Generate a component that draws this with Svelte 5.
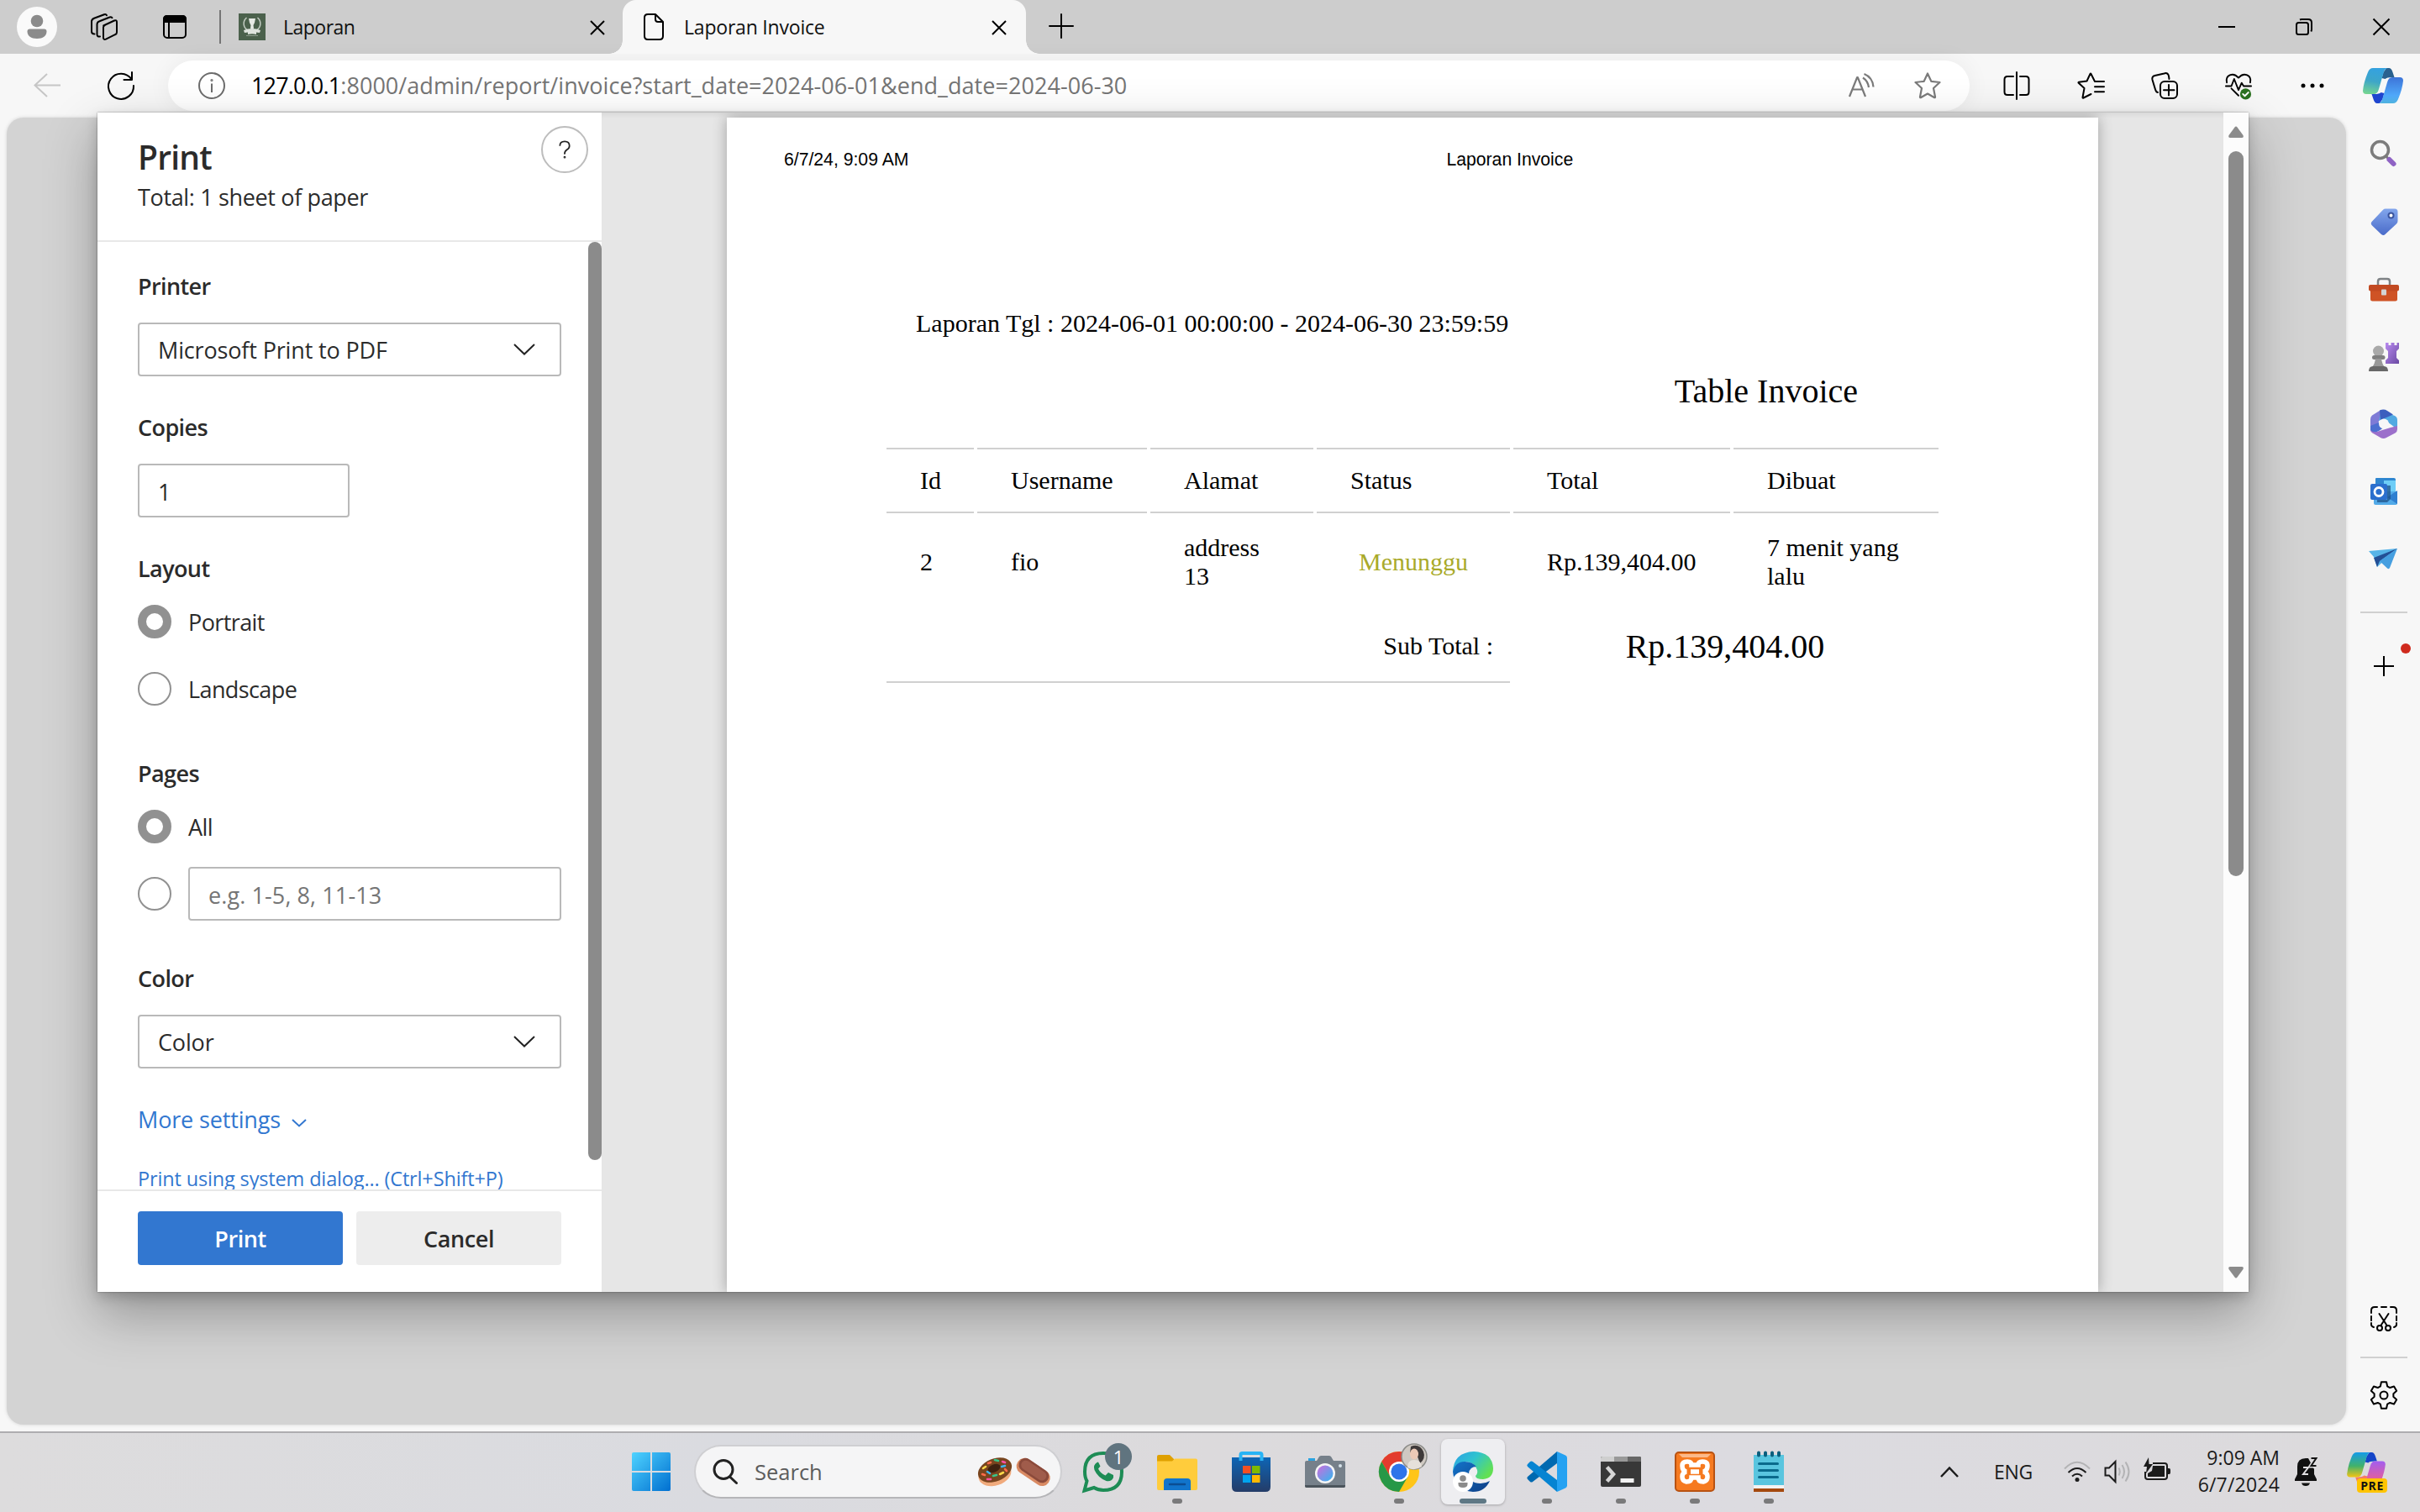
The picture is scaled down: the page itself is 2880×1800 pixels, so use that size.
<script>
  const columns = ['Id', 'Username', 'Alamat', 'Status', 'Total', 'Dibuat'];

  // Outline of a six-toothed cog centred on (cx, cy).
  function cog(cx, cy, outer, inner) {
    const pts = [];
    for (let i = 0; i < 6; i++) {
      const base = -90 + i * 60;
      for (const [off, r] of [[-21, inner], [-11, outer], [11, outer], [21, inner]]) {
        const a = ((base + off) * Math.PI) / 180;
        pts.push(`${(cx + r * Math.cos(a)).toFixed(2)} ${(cy + r * Math.sin(a)).toFixed(2)}`);
      }
    }
    return `M${pts.join('L')}Z`;
  }
</script>

{#snippet close()}
  <svg class="close" viewBox="0 0 18 18"><path d="M1 1l16 16M17 1L1 17" /></svg>
{/snippet}

{#snippet chevron()}
  <svg class="chev" viewBox="0 0 26 14"><path d="M1 1l12 11.5L25 1" /></svg>
{/snippet}

{#snippet ribbons(left, right, top, bottom)}
  <path d="M28 0h3q3 0 4.500 5l2 6h-3q-6 0-8 2l-4-1 2-7z" fill={top} />
  <path d="M20 42h-3q-3 0-4.500-5l-2-6h3q6 0 8-2l4 1-2 7z" fill={bottom} />
  <path d="M12 0H30Q26 0 24.500 6L19 25q-1.500 6-6 6H4Q0 31 0 27 1 17 6 5 8 0 12 0z" fill={left} />
  <path d="M36 42H18Q22 42 23.500 36L29 17q1.500-6 6-6H44Q48 11 48 15 47 25 42 37 40 42 36 42z" fill={right} />
{/snippet}

<div class="screen">
  <header class="tabs">
    <svg class="profile" viewBox="0 0 48 48">
      <circle cx="24" cy="24" r="24" fill="#fafafa" />
      <circle cx="24" cy="17" r="7.3" fill="#8b8b8b" />
      <path d="M15.500 26.500h17a3 3 0 0 1 3 3c0 5-4.500 8.500-11.500 8.500s-11.500-3.500-11.500-8.500a3 3 0 0 1 3-3z" fill="#8b8b8b" />
    </svg>
    <svg class="spaces line" viewBox="0 0 32 32">
      <path d="M15.200 14.500 28 8.500q3-1 3 1.500v12.500q0 2-2 2.700L18 30.600q-3 1-3-1.600V16.500q0-1.500 1.500-2.200" />
      <path d="M25.500 5.200q-.8-1.500-3-.7L10.500 9.200Q7.500 10.200 7.500 13v12q0 3 3.500 2.500" />
      <path d="M19 2.200q-1-1.700-3-.9L4 5.800Q1 7 1 9.500V21.500q0 3 3.500 3" />
    </svg>
    <svg class="tabact line" viewBox="0 0 28 28">
      <path d="M1 8V5q0-4 4-4h18q4 0 4 4v3z" fill="#000" />
      <rect x="1" y="1" width="26" height="26" rx="4" />
      <path d="M7 8v19" />
    </svg>
    <i class="divider"></i>
    <div class="tab">
      <svg class="fav" viewBox="0 0 32 32">
        <path fill="#4b614c" d="M0 0h32v32H0z" />
        <path d="M12 6h8l-1 5-1.500 3 .5 4h-4l.5-4L13 11z" fill="#e6e9e4" />
        <path d="M9.500 5C4 10 5.500 18 12 20.500M22.500 5C28 10 26.500 18 20 20.500" stroke="#c3ccc2" stroke-width="1.500" fill="none" />
        <path d="M6 20q10-4 20 0l-1 3-4-.5v2.500q-5-1.500-10 0v-2.500l-4 .5z" fill="#dfe4de" />
        <path d="M9 26.500h14" stroke="#8b9b8b" stroke-width="1" />
      </svg>
      <span class="short">Laporan</span>
      {@render close()}
    </div>
    <div class="tab active">
      <svg class="doc line" viewBox="0 0 24 32">
        <path d="M5 1h9l9 9v17q0 4-4 4H5q-4 0-4-4V5q0-4 4-4zM14 1v6q0 3 3 3h6" />
      </svg>
      <span>Laporan Invoice</span>
      {@render close()}
    </div>
    <svg class="plus line" viewBox="0 0 28 28"><path d="M14 0v28M0 14h28" /></svg>
    <div class="win">
      <svg viewBox="0 0 20 20"><path d="M0 10h20" /></svg>
      <svg viewBox="0 0 20 20"><rect x="1" y="5" width="14" height="14" rx="2.500" /><path d="M5 1.500Q6 1 7 1h8q4 0 4 4v8q0 1.500-.7 2.500" /></svg>
      <svg viewBox="0 0 20 20"><path d="M.5.5l19 19M19.500.5l-19 19" /></svg>
    </div>
  </header>

  <div class="toolbar">
    <svg class="back" viewBox="0 0 32 32"><path d="M16 3 1.500 16.500 16 30M1.500 16.500H32" /></svg>
    <svg class="reload line" viewBox="0 0 32 32"><path d="M31 16A15 15 0 1 1 28.500 8.500M29 0v9h-9.500" /></svg>
    <div class="address">
      <svg class="info" viewBox="0 0 32 32"><circle cx="16" cy="16" r="15" /><path d="M16 13.500V24" /><circle cx="16" cy="9.500" r=".6" /></svg>
      <div class="url"><b>127.0.0.1</b><span>:8000/admin/report/invoice?start_date=2024-06-01&amp;end_date=2024-06-30</span></div>
      <svg class="ic grey" viewBox="0 0 32 32"><path d="M2 29 11.200 6h.6L21 29M5 20.500h13M18 6.500q6 4 7 11.500M19.500 2q10 4 11 15.500" /></svg>
      <svg class="ic grey" viewBox="0 0 32 32"><path d="M16 1.500l4.300 9.300 10.200 1.200-7.500 7 2 10.200q.2 1.500-1.200.8L16 25.500 8.200 30q-1.400.7-1.200-.8L9 19 1.500 12l10.200-1.200z" /></svg>
    </div>
    <div class="tools">
      <svg class="ic line" viewBox="0 0 32 32"><path d="M16 0v32M12 5H5Q1.500 5 1.500 8.500v15Q1.500 27 5 27h7M20 5h7q3.500 0 3.500 3.500v15Q30.500 27 27 27h-7" /></svg>
      <svg class="ic line" viewBox="0 0 32 32"><path d="M21 11h11M21 17.200h11M21 23.200h11M21 11 16.500 2q-.5-1-1 0L11.500 10.500 2 11.800q-1 .3-.3 1L8.500 19 6.500 30q0 1 1 .5L16.500 26" /></svg>
      <svg class="ic line" viewBox="0 0 32 32"><rect x="11" y="11" width="20" height="20" rx="5" /><path d="M21 15v12.500M15 21.200h12.500M8 24q-2 0-3-3.500L1.500 9q-1-4 3-5L15.500 1.500q4.500-1.500 5.500 3L21.500 8" /></svg>
      <svg class="ic line" viewBox="0 0 32 34"><path d="M1.200 13C-1 4 9-1 16 7c7-8 17-3 14.800 6M0 17.500h7l3.500-9 5.500 14 4-9 2.500 4H32M7 20.500l9 9" /><circle cx="25" cy="27.500" r="7" fill="#2b7220" stroke="none" /><path d="M21.500 27.500l2.500 2.500 4.500-4.500" stroke="#fff" /></svg>
      <svg class="ic" viewBox="0 0 32 32"><circle cx="5" cy="16" r="2.500" /><circle cx="16" cy="16" r="2.500" /><circle cx="27" cy="16" r="2.500" /></svg>
    </div>
    <svg class="pilot" viewBox="0 0 48 42">
      <defs>
        <linearGradient id="pa" x1=".2" y1="0" x2="0" y2="1"><stop offset="0" stop-color="#35a2de" /><stop offset=".45" stop-color="#3ea6c8" /><stop offset="1" stop-color="#7ad98c" /></linearGradient>
        <linearGradient id="pb" x1="0" y1="0" x2="0" y2="1"><stop offset="0" stop-color="#3d74d8" /><stop offset=".7" stop-color="#4fa8fa" /><stop offset="1" stop-color="#50b3df" /></linearGradient>
      </defs>
      {@render ribbons('url(#pa)', 'url(#pb)', '#2a618e', '#1f45cf')}
    </svg>
  </div>

  <div class="middle">
    <div class="content"></div>
    <aside class="side">
      <svg viewBox="0 0 36 36">
        <defs><linearGradient id="vi" x1="0" y1="0" x2="1" y2="1"><stop offset="0" stop-color="#b98af0" /><stop offset="1" stop-color="#6b4aa3" /></linearGradient></defs>
        <circle cx="13.500" cy="11.500" r="10" fill="none" stroke="#7c7c7c" stroke-width="3.500" />
        <path d="M20.500 19l3 3" stroke="#7a7a7a" stroke-width="3" /><path d="M24.500 23l5 5" stroke="#8f63c4" stroke-width="6" stroke-linecap="round" />
      </svg>
      <svg viewBox="0 0 36 36">
        <defs><linearGradient id="tg" x1="0" y1="0" x2="0" y2="1"><stop offset="0" stop-color="#82a6ec" /><stop offset="1" stop-color="#4a6bc9" /></linearGradient></defs>
        <path d="M20 1.500h11q3.500 0 3.500 3.500v11q0 2-1.500 3.500L19.500 32q-2 2-4.500 0L4 21.500q-2.500-2.500 0-5L17 2.800q1.200-1.300 3-1.300z" fill="url(#tg)" /><circle cx="26.500" cy="9.500" r="3" fill="#fff" stroke="#3a559f" stroke-width="2" />
      </svg>
      <svg viewBox="0 0 36 36">
        <path d="M11 12V8q0-3 3-3h8q3 0 3 3v4" fill="none" stroke="#7e8285" stroke-width="2.500" />
        <path d="M2 16h32v13q0 2.500-2.500 2.500h-27Q2 31.500 2 29z" fill="#cf5325" /><rect y="12" width="36" height="7.500" rx="2" fill="#c24a22" /><rect x="15" y="17.500" width="6" height="7" rx="1" fill="#d4d4d4" />
      </svg>
      <svg viewBox="0 0 36 36">
        <circle cx="11.500" cy="11" r="6.500" fill="#a9a9a9" /><rect x="4" y="16" width="15.500" height="5" rx="2.500" fill="#7f7f7f" /><path d="M8 20h7q1 7 4 10H4q3-3 4-10z" fill="#989898" /><path d="M0 35q0-6 5-6h13q5 0 5 6z" fill="#686868" />
        <path d="M20 1h3.500v3h3V1h4v3h3V1H36v7l-3 3v8l3 3v4H20v-4l3-3v-8l-3-3z" fill="url(#vi)" />
      </svg>
      <svg viewBox="0 0 36 36">
        <path d="M12 2.500 4 7.500Q2 9 2 12v12q0 2.500 2.500 4L9 30l3-16 6-5 4-6Q17-.5 12 2.500z" fill="#7e7bd6" />
        <path d="M15 2 31 8q3 1.500 3 5v11L18 12l-6 2z" fill="#52a9e2" /><path d="M13 1.500q5-2 9 .5l7 4.500L14 13z" fill="#3c5fbe" /><path d="M2 24q4 5 11 2l13-4 8-2v4q0 3-2.500 4.500L21 34q-3.500 2-7 0L4.500 28.500Q2 27 2 24z" fill="#9c70cb" /><path d="M2 20v5q4 4 10 1l6-4-6-6z" fill="#4d6fd0" /><circle cx="18" cy="17.500" r="6" fill="#f7f7f7" />
      </svg>
      <svg viewBox="0 0 36 36">
        <path d="M9 2h21q2 0 2 2v16H8V3q0-1 1-1z" fill="#2e86d0" /><path d="M18 5h14v14H18z" fill="#6dcdf7" /><path d="M6 18l28 0v14q0 2-2 2H8q-2 0-2-2z" fill="#52aae8" /><path d="M34 17v16L22 25z" fill="#2f7fd0" /><path d="M22 11h4v16l-4 4H10v-3h12z" fill="#1b4c83" opacity=".7" /><rect x="2" y="9" width="20" height="19" rx="2" fill="#2b6fce" /><circle cx="12" cy="18.500" r="5" fill="none" stroke="#fff" stroke-width="2.800" />
      </svg>
      <svg viewBox="0 0 36 36">
        <path d="M0 9 34 6 10 28 6 16z" fill="#57b4e8" /><path d="M6 17 34 6 13 21 10 28z" fill="#234f95" /><path d="M34 6 25 29q-1 2-3 .5L13 21z" fill="#469fe0" />
      </svg>
      <hr />
      <div class="add"><svg viewBox="0 0 24 24"><path d="M12 0v24M0 12h24" stroke="#000" stroke-width="2" /></svg><i></i></div>
      <div class="grow"></div>
      <svg class="small line" viewBox="0 0 32 32">
        <path d="M1 9V6q0-4 4-4h3M13 2h6M24 2h3q4 0 4 4v3M1 13v5M31 13v5M1 21v2q0 2 3 3M31 21v2q0 2-3 3M10.500 10l8.500 13M21.500 10 13 23" /><circle cx="11" cy="27" r="3" /><circle cx="21" cy="27" r="3" />
      </svg>
      <hr class="low" />
      <svg class="gear line" viewBox="0 0 34 34"><path d={cog(17, 17, 16, 11.5)} /><circle cx="17" cy="17" r="4.500" /></svg>
    </aside>

    <section class="dialog">
      <div class="panel">
        <div class="head">
          <div><h1>Print</h1><p>Total: 1 sheet of paper</p></div>
          <span class="help"><svg viewBox="0 0 16 24"><path d="M1.500 7Q1.500 1 8 1t6.500 6q0 3-3.500 5.200T8 18.500" /><circle cx="8" cy="22.500" r=".6" /></svg></span>
        </div>
        <div class="scroll">
          <div class="form">
            <h2>Printer</h2>
            <div class="box">Microsoft Print to PDF{@render chevron()}</div>
            <h2>Copies</h2>
            <div class="box half">1</div>
            <h2>Layout</h2>
            <div class="row tight"><i class="radio on"></i>Portrait</div>
            <div class="row"><i class="radio"></i>Landscape</div>
            <h2 class="wide">Pages</h2>
            <div class="row tight"><i class="radio on"></i>All</div>
            <div class="row range"><i class="radio"></i><div class="box hint">e.g. 1-5, 8, 11-13</div></div>
            <h2 class="color">Color</h2>
            <div class="box">Color{@render chevron()}</div>
            <a class="more" href="#more">More settings<svg viewBox="0 0 18 10"><path d="M1 1l8 7.500L17 1" /></svg></a>
            <a class="system" href="#system">Print using system dialog... (Ctrl+Shift+P)</a>
          </div>
          <i class="thumb"></i>
        </div>
        <div class="actions"><button class="primary">Print</button><button>Cancel</button></div>
      </div>

      <div class="preview">
        <article class="paper">
          <div class="pagehead"><span>6/7/24, 9:09 AM</span><span>Laporan Invoice</span></div>
          <p class="period">Laporan Tgl : 2024-06-01 00:00:00 - 2024-06-30 23:59:59</p>
          <p class="title">Table Invoice</p>
          <div class="grid">
            {#each columns as c}<div class="th">{c}</div>{/each}
            <div class="td">2</div>
            <div class="td">fio</div>
            <div class="td">address<br />13</div>
            <div class="td wait">Menunggu</div>
            <div class="td">Rp.139,404.00</div>
            <div class="td">7 menit yang<br />lalu</div>
            <div class="sub">Sub Total :</div>
            <div class="sum">Rp.139,404.00</div>
          </div>
        </article>
      </div>
      <div class="bar">
        <svg viewBox="0 0 18 14"><path d="M7.500 1.500q1.500-2 3 0L17.500 11q1 3-1.500 3H2q-2.500 0-1.500-3z" /></svg>
        <i></i>
        <svg class="down" viewBox="0 0 18 14"><path d="M7.500 1.500q1.500-2 3 0L17.500 11q1 3-1.500 3H2q-2.500 0-1.500-3z" /></svg>
      </div>
    </section>
  </div>

  <footer class="taskbar">
    <svg class="start" viewBox="0 0 46 46">
      <defs><linearGradient id="st" x1="0" y1="0" x2="46" y2="46" gradientUnits="userSpaceOnUse"><stop offset="0" stop-color="#4fd3ff" /><stop offset="1" stop-color="#006fd0" /></linearGradient></defs>
      <path d="M2 0h20v22H0V2q0-2 2-2zM24 0h20q2 0 2 2v20H24zM0 24h22v22H2q-2 0-2-2zM24 24h22v20q0 2-2 2H24z" fill="url(#st)" />
    </svg>
    <div class="search">
      <svg class="glass" viewBox="0 0 30 30"><circle cx="13" cy="12.500" r="11" /><path d="M20.500 21l8 7.500" /></svg>
      <span>Search</span>
      <svg class="treats" viewBox="0 0 90 36">
        <ellipse cx="21" cy="21" rx="20" ry="13.500" fill="#f0aa7c" transform="rotate(-18 21 21)" />
        <ellipse cx="21" cy="16" rx="21" ry="13.500" fill="#78451f" transform="rotate(-22 21 16)" />
        <ellipse cx="20" cy="14" rx="8" ry="4.500" fill="#3f2110" transform="rotate(-22 20 14)" />
        <g stroke-width="2.600" stroke-linecap="round"><path d="M7 14l3-2M27 21l4-2" stroke="#ffd94a" /><path d="M13 8l3-1M6 21l3 1M33 15l2 2" stroke="#ff6a4a" /><path d="M21 4l4 1M19 23l4-1" stroke="#37c58a" /><path d="M29 12l4-1M12 18l3 2" stroke="#3fb5f0" /><path d="M30 6l3 1M12 27l4 0" stroke="#ff4fa0" /></g>
        <rect x="45" y="9" width="44" height="19" rx="9" fill="#d98a63" transform="rotate(34 67 18)" /><rect x="47" y="8.500" width="40" height="16" rx="8" fill="#8b4a3b" transform="rotate(34 67 17)" /><rect x="50" y="11" width="34" height="11" rx="5.500" fill="#a05c4b" transform="rotate(34 67 17)" />
      </svg>
    </div>
    <div class="apps">
      <div class="app">
        <svg viewBox="0 0 48 48"><path d="M1.500 46.500l3-11.500Q2 31 2 24 2 2 24 2t22 22-22 22q-6 0-11-3z" fill="none" stroke="#1d8c55" stroke-width="4" /><path d="M16.500 13q-5 3-3 9 4 9 14 13 6 1.500 8.500-4v-3l-6-3-3.500 3.500q-6-2.500-8.500-8l2.500-3-2.500-5z" fill="#1d8c55" /></svg>
        <span class="badge">1</span>
      </div>
      <div class="app run">
        <svg viewBox="0 0 48 48"><path d="M0 6q0-2 2-2h13l5 5v6H0z" fill="#dfa000" /><path d="M0 11.500h18l3-3h25q2 0 2 2V44q0 2-2 2H2q-2 0-2-2z" fill="#ffcc3c" /><path d="M8 46V36q0-4 4-4h24q4 0 4 4v10z" fill="#1174cb" /><path d="M15 39h18" stroke="#0b4d92" stroke-width="2.500" stroke-linecap="round" /></svg>
      </div>
      <div class="app">
        <svg viewBox="0 0 48 48"><defs><linearGradient id="ms" x1="0" y1="0" x2="0" y2="1"><stop offset="0" stop-color="#0e65b5" /><stop offset="1" stop-color="#243c68" /></linearGradient></defs>
          <path d="M1 7h46v35q0 6-6 6H7q-6 0-6-6z" fill="url(#ms)" /><path d="M11.500 11V4q0-2 2-2h21q2 0 2 2v7" fill="none" stroke="#27b3f5" stroke-width="4" />
          <path d="M14 17h9.500v9H14z" fill="#f25022" /><path d="M25 17h9.500v9H25z" fill="#7fba00" /><path d="M14 28h9.500v9H14z" fill="#00a4ef" /><path d="M25 28h9.500v9H25z" fill="#ffb900" /></svg>
      </div>
      <div class="app">
        <svg viewBox="0 0 48 48"><path d="M4 8h8v6H4z" fill="#2aa3e0" /><path d="M0 13q0-2 2-2h12l3-5q1-1 2.500-1h9q1.500 0 2.500 1l3 5h12q2 0 2 2v28q0 2-2 2H2q-2 0-2-2z" fill="#76808a" /><path d="M0 40h48v1q0 2-2 2H2q-2 0-2-2z" fill="#4b545c" /><circle cx="24" cy="26" r="12" fill="#f5f5f5" /><circle cx="24" cy="26" r="9.500" fill="url(#lens)" /><circle cx="42" cy="17" r="2" fill="#d6e2ea" />
          <defs><linearGradient id="lens" x1="0" y1="0" x2="1" y2="1"><stop offset=".2" stop-color="#b07ae0" /><stop offset=".9" stop-color="#3fb0ee" /></linearGradient></defs></svg>
      </div>
      <div class="app run">
        <svg viewBox="0 0 48 48"><circle cx="24" cy="24" r="24" fill="#ffc518" /><path d="M3.200 12A24 24 0 0 1 44.800 12H24z" fill="#e33b2e" /><path d="M3.200 12l10.400 18L24 24V12z" fill="#e33b2e" /><path d="M3.200 12A24 24 0 0 0 24 48l10.400-18L24 30l-10.400 0z" fill="#279847" /><circle cx="24" cy="24" r="12" fill="#fff" /><circle cx="24" cy="24" r="9.600" fill="#2d74ea" /></svg>
        <svg class="photo" viewBox="0 0 32 32"><circle cx="16" cy="16" r="15" fill="#cfc9c2" stroke="#8b8b88" stroke-width="1.500" /><path d="M12 4q10-4 15 6 3 8-4 14-3-8-5-13-4-1-7 1z" fill="#3f3a3a" /><ellipse cx="16" cy="13" rx="5" ry="6.500" fill="#ecc9b6" /><path d="M8 29q0-9 8-9t9 8q-9 6-17 1z" fill="#e6e0da" /></svg>
      </div>
      <div class="app run current">
        <svg viewBox="0 0 48 48"><defs><linearGradient id="eg" x1="0" y1="0" x2="1" y2=".6"><stop offset="0" stop-color="#2b9fe6" /><stop offset=".5" stop-color="#2fc3cf" /><stop offset="1" stop-color="#62e053" /></linearGradient><linearGradient id="eb" x1="0" y1="0" x2="1" y2="1"><stop offset="0" stop-color="#1373c9" /><stop offset="1" stop-color="#0f3f86" /></linearGradient></defs>
          <path d="M0 24Q1 1 25 0q22 1 23 20 0 12-12 13-9 0-9-4 3-3 2-7-3-9-13-10Q5 13 0 24z" fill="url(#eg)" />
          <path d="M0 24q3-12 14-12 9 0 14 6-8 0-9 8 0 12 14 12 6 0 11-3-6 13-20 13Q2 46 0 24z" fill="url(#eb)" />
          <circle cx="12" cy="36" r="12" fill="#fff" /><circle cx="12" cy="32" r="3.800" fill="#8b8b8b" /><path d="M6.500 37h11v2q0 4-5.500 4t-5.500-4z" fill="#8b8b8b" /></svg>
      </div>
      <div class="app run">
        <svg viewBox="0 0 48 48"><path d="M36 0v14L7 36q-1.500 1-3 0l-3-3q-1.500-1.500 0-3z" fill="#0069b0" /><path d="M1 18q-1.500-1.500 0-3l3-3q1.500-1 3 0l29 22v14z" fill="#0684d2" /><path d="M36 0l10 4.500q2 1 2 3v33q0 2-2 3L36 48z" fill="#25a2f2" /></svg>
      </div>
      <div class="app run">
        <svg viewBox="0 0 48 48"><path d="M0 8q0-2 2-2h44q2 0 2 2v32q0 2-2 2H2q-2 0-2-2z" fill="#383838" /><path d="M0 8q0-2 2-2h14v6H0z" fill="#cfcfcf" /><path d="M16 6h16v6H16z" fill="#999" /><path d="M32 6h14q2 0 2 2v4H32z" fill="#666" /><path d="M7.500 18.500 15 27l-7.500 8.500" fill="none" stroke="#d6d6d6" stroke-width="4.500" /><path d="M23.500 32h16v5h-16z" fill="#f2f2f2" /></svg>
      </div>
      <div class="app run">
        <svg viewBox="0 0 48 48"><rect x="1" y="1" width="46" height="46" rx="4" fill="#f67a20" stroke="#b85212" stroke-width="2" /><path d="M5 3h38l-4 4H9z" fill="#fbb98a" /><path d="M14 36q-5-1-5-6t5-6q-5-1-5-7 0-5 6-5 5 0 5 4l8 0q0-4 5-4 6 0 6 5 0 6-5 7 5 1 5 6t-5 6q-6 0-6-5h-8q0 5-6 5zM19 24h10" fill="none" stroke="#fff" stroke-width="5.500" /></svg>
      </div>
      <div class="app run">
        <svg viewBox="0 0 48 48"><path d="M6 4h36v37H6z" fill="#59c5df" /><path d="M6 40h36v4H6z" fill="#f3f3f3" /><path d="M6 44h36v4H6z" fill="#a4490f" /><path d="M12.500 14.500h22M12.500 22.500h22M12.500 30.500h22" stroke="#0a6a8c" stroke-width="3" stroke-linecap="round" /><path d="M12 1.500v3M20 1.500v3M28 1.500v3M36 1.500v3" stroke="#0b5f7e" stroke-width="4" stroke-linecap="round" /></svg>
      </div>
    </div>
    <div class="tray">
      <svg class="up" viewBox="0 0 22 13"><path d="M1 12 11 1.500 21 12" /></svg>
      <span class="lang">ENG</span>
      <svg class="wifi" viewBox="0 0 32 26"><path d="M1 9.500Q16-6 31 9.500" stroke="#b3b3b5" /><path d="M5.500 14q10.500-10 21 0M10 18.500q6-5.500 12 0" /><circle cx="16" cy="22.500" r="2.500" fill="#1b1b1b" stroke="none" /></svg>
      <svg class="vol" viewBox="0 0 32 28"><path d="M1.500 9.500h4.500L13.500 2v24L6 18.500H1.500z" /><path d="M17.500 9.500q2.500 4.500 0 9M21.500 6q5 8 0 16M25.500 2.500q8 11.500 0 23" stroke="#b3b3b5" /></svg>
      <svg class="bat" viewBox="0 0 32 30"><path d="M11 7h14q3 0 3 3v13q0 3-3 3H5q-3 0-3-3v-6" /><path d="M11 10h14v13H5v-4l5-3zM29 13h1.500q1.500 0 1.500 2v3q0 2-1.500 2H29zM6 0 0 11h4L3 19l8-11H6.500z" fill="#1b1b1b" stroke="none" /></svg>
      <div class="clock"><span>9:09 AM</span><span class="date">6/7/2024</span></div>
      <svg class="bell" viewBox="0 0 28 36"><path d="M13 2Q3 2 3 12v9l-3 6v2h26v-2l-3-6v-6L16 2zM8 31.500h10q-1 3.500-5 3.500t-5-3.500z" fill="#111" stroke="none" /><path d="M10 13h6l-6 8h6" stroke="#e0dfe1" /><path d="M19.500 2h6l-6 9h6" stroke="#e0dfe1" stroke-width="5" /><path d="M19.500 2h6l-6 9h6" stroke="#111" /></svg>
      <div class="pre">
        <svg class="mini" viewBox="0 0 48 42"><defs><linearGradient id="qa" x1="0" y1="0" x2="0" y2="1"><stop offset="0" stop-color="#159be9" /><stop offset=".55" stop-color="#41b26b" /><stop offset="1" stop-color="#f4c413" /></linearGradient><linearGradient id="qb" x1="0" y1="0" x2="0" y2="1"><stop offset="0" stop-color="#a35df0" /><stop offset="1" stop-color="#f9607d" /></linearGradient></defs>
          {@render ribbons('url(#qa)', 'url(#qb)', '#1545c8', '#f77a62')}
        </svg>
        <b>PRE</b>
      </div>
    </div>
  </footer>
</div>

<style>
  :global(body) { margin: 0; overflow: hidden; }
  * { box-sizing: border-box; }
  svg { display: block; flex: none; overflow: visible; }
  .screen { width: 2880px; height: 1800px; display: flex; flex-direction: column; background: #f7f7f7; font: 27px "Open Sans", "Noto Sans", sans-serif; color: #2b2b2b; overflow: hidden; }
  .line { fill: none; stroke: #000; stroke-width: 2; stroke-linecap: round; stroke-linejoin: round; }

  .tabs { height: 64px; flex: none; background: #cdcdcd; display: flex; align-items: center; padding-left: 20px; }
  .profile { width: 48px; height: 48px; margin-right: 40px; }
  .spaces { width: 32px; height: 32px; margin-right: 54px; }
  .tabact { width: 28px; height: 28px; margin-right: 39px; }
  .divider { width: 2px; height: 40px; background: #757575; }
  .tab { width: 478px; height: 64px; display: flex; align-items: center; padding: 0 21px; font-size: 23px; letter-spacing: -0.2px; color: #111; }
  .tab span { flex: 1; }
  .tab .short { letter-spacing: -0.5px; }
  .tab:not(.active) { padding-right: 21px; }
  .fav { width: 32px; height: 32px; margin-right: 21px; }
  .doc { width: 24px; height: 32px; margin-right: 24px; }
  .close { width: 18px; height: 18px; margin-top: 2px; fill: none; stroke: #000; stroke-width: 2; }
  .active { position: relative; width: 480px; background: #f7f7f7; border-radius: 16px 16px 0 0; padding: 0 23px 0 25px; }
  .active::before, .active::after { content: ""; position: absolute; bottom: 0; width: 16px; height: 16px; }
  .active::before { left: -16px; background: radial-gradient(circle at 0 0, transparent 15.500px, #f7f7f7 16px); }
  .active::after { right: -16px; background: radial-gradient(circle at 100% 0, transparent 15.500px, #f7f7f7 16px); }
  .plus { width: 28px; height: 28px; margin: 0 0 2px 28px; }
  .win { margin-left: auto; display: flex; gap: 72px; padding-right: 36px; }
  .win svg { width: 20px; height: 20px; fill: none; stroke: #000; stroke-width: 2; }

  .toolbar { height: 76px; flex: none; display: flex; align-items: center; padding-left: 40px; }
  .back { width: 32px; height: 32px; margin-bottom: 2px; fill: none; stroke: #c6c6c6; stroke-width: 2; }
  .reload { width: 32px; height: 32px; margin: 0 40px 0 56px; }
  .address { width: 2144px; height: 60px; border-radius: 30px; background: #fff; display: flex; align-items: center; padding: 0 34px 0 36px; box-shadow: 0 0 28px rgba(0, 0, 0, 0.06); }
  .info { width: 32px; height: 32px; margin-right: 31px; fill: none; stroke: #6c6c6c; stroke-width: 2; }
  .url { flex: 1; display: flex; margin-bottom: 2px; color: #757575; letter-spacing: 0.05px; }
  .url b { font-weight: 400; color: #000; letter-spacing: -0.85px; }
  .ic { width: 32px; height: 32px; }
  .address .ic + .ic { margin-left: 47px; }
  .grey { fill: none; stroke: #7b7b7b; stroke-width: 2.200; stroke-linejoin: round; }
  .tools { display: flex; gap: 56px; padding: 0 44px 0 40px; }
  .pilot { width: 48px; height: 42px; }

  .middle { flex: 1; position: relative; display: flex; min-height: 0; padding-left: 8px; }
  .content { width: 2784px; height: 1556px; background: #d3d3d3; border-radius: 20px; box-shadow: 0 0 4px rgba(0, 0, 0, 0.15); }
  .side { flex: 1; display: flex; flex-direction: column; align-items: center; padding: 27px 0 26px 1px; gap: 44px; }
  .side svg { width: 36px; height: 36px; }
  .side hr { width: 56px; height: 2px; border: 0; margin: 1px 0 7px; background: #d0d0d0; flex: none; }
  .add { position: relative; height: 24px; }
  .add svg { width: 24px; height: 24px; }
  .add i { position: absolute; left: 32px; top: -15px; width: 12px; height: 12px; border-radius: 50%; background: #cf2a1e; }
  .grow { flex: 1; }
  .side .small { width: 32px; height: 32px; margin-bottom: -15px; }
  .side .low { margin: 0 0 -17px; }
  .side .gear { width: 34px; height: 34px; }

  .dialog { position: absolute; left: 116px; top: -6px; width: 2560px; height: 1404px; display: flex; background: #e6e6e6; box-shadow: 0 0 2px rgba(0, 0, 0, 0.4), 0 6px 14px rgba(0, 0, 0, 0.18), 0 26px 58px rgba(0, 0, 0, 0.3); }
  .panel { width: 600px; background: #fff; display: flex; flex-direction: column; }
  .head { height: 154px; flex: none; border-bottom: 2px solid #e8e8e8; display: flex; justify-content: space-between; padding: 16px 16px 0 48px; }
  h1 { margin: 10px 0 2px; font-size: 39px; line-height: 54px; font-weight: 600; letter-spacing: -0.8px; }
  .head p { margin: 0; line-height: 38px; letter-spacing: -0.35px; }
  .help { width: 56px; height: 56px; border: 2px solid #bdbdbd; border-radius: 50%; display: grid; place-items: center; }
  .help svg { width: 14px; height: 22px; fill: none; stroke: #222; stroke-width: 2; }
  .scroll { flex: 1; display: flex; min-height: 0; overflow: hidden; }
  .form { width: 584px; padding: 33px 32px 0 48px; letter-spacing: -0.15px; }
  h2 { margin: 0 0 23px; font-size: 27px; line-height: 40px; font-weight: 600; letter-spacing: -0.6px; }
  .box + h2 { margin-top: 41px; }
  .box { height: 64px; border: 2px solid #b9b9b9; border-radius: 4px; padding: 0 22px; display: flex; align-items: center; justify-content: space-between; }
  .half { width: 252px; padding-top: 2px; }
  .chev { width: 26px; height: 14px; margin-right: 7px; fill: none; stroke: #222; stroke-width: 2; }
  .row { display: flex; align-items: center; gap: 20px; height: 40px; margin-top: 40px; letter-spacing: -0.6px; }
  .tight { margin-top: 0; }
  .radio { width: 40px; height: 40px; flex: none; border: 2px solid #919191; border-radius: 50%; }
  .on { border-width: 10px; }
  h2.wide { margin-top: 61px; }
  .range { height: 64px; margin-top: 28px; }
  .hint { flex: 1; padding-top: 2px; color: #757575; letter-spacing: 0.1px; }
  h2.color { margin-top: 49px; }
  a { text-decoration: none; color: #3277d0; }
  .more { display: flex; align-items: center; gap: 13px; height: 40px; margin-top: 40px; }
  .more svg { width: 18px; height: 10px; margin-top: 10px; fill: none; stroke: #3277d0; stroke-width: 2; }
  .system { display: block; margin-top: 31px; font-size: 23.500px; line-height: 40px; white-space: nowrap; }
  .thumb { width: 16px; height: 1093px; border-radius: 8px; background: #8b8b8b; }
  .actions { height: 122px; flex: none; border-top: 2px solid #e8e8e8; display: flex; gap: 16px; padding: 24px 48px 0; }
  button { width: 244px; height: 64px; padding: 0; border: 0; border-radius: 4px; background: #ededed; color: #2b2b2b; font: 600 27px "Open Sans", sans-serif; letter-spacing: -0.4px; }
  .primary { background: #3277d0; color: #fff; }

  .preview { flex: 1; display: flex; padding: 6px 149px 0; overflow: hidden; box-shadow: inset 0 6px 6px -4px rgba(0, 0, 0, 0.08); }
  .paper { flex: 1; background: #fff; box-shadow: 0 0 16px rgba(0, 0, 0, 0.3); font: 30px/34px "Liberation Serif", serif; color: #000; }
  .pagehead { display: flex; gap: 640px; padding: 37px 0 0 68px; font: 21.200px/26px "Liberation Sans", sans-serif; }
  .period { margin: 165px 0 0 225px; }
  .title { margin: 41px 286px 0 0; text-align: right; font-size: 40px; line-height: 46px; }
  .grid { margin: 44px 0 0 190px; display: grid; grid-template-columns: 104px 202px 194px 230px 258px 244px; gap: 4px; }
  .th { height: 78px; border: solid #d0d0d0; border-width: 2px 0; padding: 0 0 1px 40px; display: flex; align-items: center; }
  .td { height: 108px; padding-left: 40px; display: flex; align-items: center; white-space: nowrap; }
  .wait { padding-left: 50px; color: #a9aa2b; }
  .sub { grid-column: 1 / 5; height: 86px; border-bottom: 2px solid #d0d0d0; display: flex; align-items: center; justify-content: flex-end; padding-right: 20px; }
  .sum { grid-column: 5 / 7; height: 86px; display: flex; align-items: center; justify-content: center; padding-right: 2px; font-size: 40px; }

  .bar { width: 30px; background: #fcfcfc; display: flex; flex-direction: column; align-items: center; padding: 16px 0; }
  .bar svg { width: 18px; height: 14px; fill: #8b8b8b; }
  .bar i { width: 18px; height: 863px; margin: 16px 0 auto; border-radius: 9px; background: #8b8b8b; }
  .down { transform: rotate(180deg); }

  .taskbar { height: 96px; flex: none; border-top: 2px solid #aeadb0; background: linear-gradient(90deg, #dddcdd, #dadbe0 30%, #dcdadc 50%, #dcdbe0 72%, #dcdadc); display: flex; align-items: center; padding: 0 40px 2px 752px; }
  .start { width: 46px; height: 46px; margin-right: 28px; }
  .search { width: 438px; height: 64px; border: 2px solid #cfcfd2; border-bottom-color: #b5b5b8; border-radius: 32px; background: #f5f5f6; display: flex; align-items: center; padding: 0 9px 0 20px; }
  .search span { flex: 1; margin-left: 20px; font-size: 25.500px; color: #5c5c5c; }
  .glass { width: 30px; height: 30px; fill: none; stroke: #222; stroke-width: 3; stroke-linecap: round; }
  .treats { width: 90px; height: 36px; }
  .apps { display: flex; margin-left: 5px; }
  .app { position: relative; width: 76px; height: 78px; margin: 0 6px; display: grid; place-items: center; border-radius: 8px; }
  .app svg { width: 48px; height: 48px; }
  .current { background: #eeeef1; box-shadow: 0 1px 3px rgba(0, 0, 0, 0.25); }
  .run::after { content: ""; position: absolute; bottom: 1px; left: 32px; width: 12px; height: 6px; border-radius: 3px; background: #7a7a7b; }
  .current::after { left: 22px; width: 32px; background: #5f7885; }
  .badge { position: absolute; left: 40px; top: 5px; width: 32px; height: 32px; border-radius: 50%; background: #60747f; color: #fff; font-size: 22px; line-height: 32px; text-align: center; }
  .app .photo { position: absolute; left: 40px; top: 5px; width: 32px; height: 32px; }
  .tray { margin-left: auto; display: flex; align-items: center; font-size: 23px; color: #1b1b1b; }
  .tray svg { fill: none; stroke: #1b1b1b; stroke-width: 2; }
  .tray .up { width: 22px; height: 13px; stroke-width: 2.500; margin-right: 42px; }
  .lang { width: 83px; letter-spacing: -0.3px; }
  .wifi { width: 32px; height: 26px; margin-right: 16px; }
  .vol { width: 32px; height: 28px; margin-right: 15px; }
  .bat { width: 32px; height: 30px; margin-bottom: 4px; }
  .clock { width: 130px; display: flex; flex-direction: column; text-align: right; line-height: 32px; margin-bottom: 2px; }
  .date { letter-spacing: 0.2px; }
  .bell { width: 28px; height: 36px; margin: 0 34px 0 18px; }
  .pre { position: relative; width: 47px; height: 46px; }
  .tray .mini { width: 46px; height: 40px; stroke: none; }
  .pre b { position: absolute; right: -1px; bottom: -2px; width: 36px; height: 17px; border-radius: 4px; background: #ffc400; color: #111; font-size: 14px; line-height: 17px; letter-spacing: 0.6px; text-align: center; }
</style>
